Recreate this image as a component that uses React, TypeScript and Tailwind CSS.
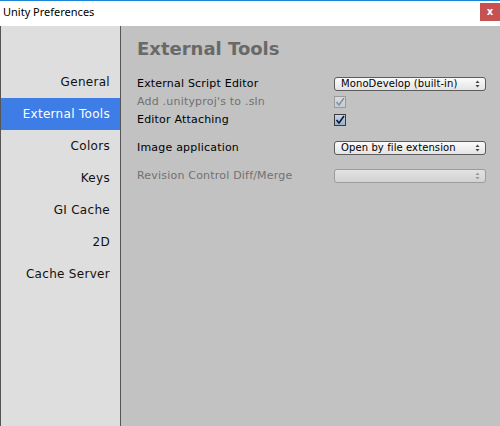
const sections = ["General", "External Tools", "Colors", "Keys", "GI Cache", "2D", "Cache Server"];

function Arrows({ dim }: { dim?: boolean }) {
  const c = dim ? "#9a9a9a" : "#444";
  return (
    <svg width="5" height="8" viewBox="0 0 5 8" className="shrink-0">
      <path d="M2.5 0.5 L4.5 3 L0.5 3 Z" fill={c} />
      <path d="M0.5 5 L4.5 5 L2.5 7.5 Z" fill={c} />
    </svg>
  );
}

function Popup({ value, disabled }: { value?: string; disabled?: boolean }) {
  return (
    <div
      className={`flex h-[14px] w-[152px] items-center justify-between rounded-[3px] border pl-[6px] pr-[5px] ${
        disabled
          ? "border-[#9c9c9c] bg-gradient-to-b from-[#e2e2e2] to-[#d2d2d2]"
          : "border-[#5c5c5c] bg-gradient-to-b from-[#fbfbfb] to-[#e4e4e4]"
      }`}
    >
      <span className="text-[10px] leading-none tracking-[0.1px] text-black">{value}</span>
      <Arrows dim={disabled} />
    </div>
  );
}

function Toggle({ disabled }: { disabled?: boolean }) {
  return (
    <div
      className={`flex h-[12px] w-[12px] items-center justify-center border ${
        disabled
          ? "border-[#9a9a9a] bg-gradient-to-b from-[#d8dde4] to-[#c4ccd6]"
          : "border-[#3c3c3c] bg-gradient-to-b from-[#c9d6e8] to-[#98afcf]"
      }`}
    >
      <svg width="10" height="10" viewBox="0 0 10 10">
        <path
          d="M1.5 5 L4 8 L9 1"
          fill="none"
          stroke={disabled ? "#8c9098" : "#0e1a33"}
          strokeWidth="1.6"
        />
      </svg>
    </div>
  );
}

function Row({ label, dim, children, className = "" }: { label: string; dim?: boolean; children: React.ReactNode; className?: string }) {
  return (
    <div className={`flex h-[18px] items-center ${className}`}>
      <span className={`w-[197px] text-[11px] tracking-[0.2px] ${dim ? "text-[#717171]" : "text-black"}`}>{label}</span>
      {children}
    </div>
  );
}

export default function App() {
  return (
    <div className="flex h-[426px] w-[500px] flex-col overflow-hidden bg-white font-['DejaVu_Sans',sans-serif]">
      <div className="h-px bg-[#1b86d8]" />
      <div className="flex h-[25px] items-start justify-between">
        <span className="pl-[3px] pt-[5px] font-['Noto_Sans',sans-serif] text-[11px] leading-none text-black">Unity Preferences</span>
        <div className="mt-[2px] flex h-[18px] w-[20px] items-center justify-center bg-[#c75050] text-[10px] font-bold leading-none text-white">
          x
        </div>
      </div>
      <div className="flex flex-1">
        <div className="w-[121px] border-x border-[#555] bg-[#dedede] pt-[40px]">
          {sections.map((s) => (
            <div
              key={s}
              className={`flex h-[32px] items-center justify-end pr-[10px] text-[12px] tracking-[0.3px] ${
                s === "External Tools" ? "bg-[#3e7de6] text-white" : "text-[#111]"
              }`}
            >
              {s}
            </div>
          ))}
        </div>
        <div className="flex-1 bg-[#c2c2c2] pl-[16px] pt-[14px]">
          <h1 className="text-[18px] font-bold leading-[18px] text-[#696969]">External Tools</h1>
          <div className="mt-[17px]">
            <Row label="External Script Editor">
              <Popup value="MonoDevelop (built-in)" />
            </Row>
            <Row label="Add .unityproj's to .sln" dim>
              <Toggle disabled />
            </Row>
            <Row label="Editor Attaching">
              <Toggle />
            </Row>
            <Row label="Image application" className="mt-[10px]">
              <Popup value="Open by file extension" />
            </Row>
            <Row label="Revision Control Diff/Merge" dim className="mt-[10px]">
              <Popup disabled />
            </Row>
          </div>
        </div>
      </div>
    </div>
  );
}
